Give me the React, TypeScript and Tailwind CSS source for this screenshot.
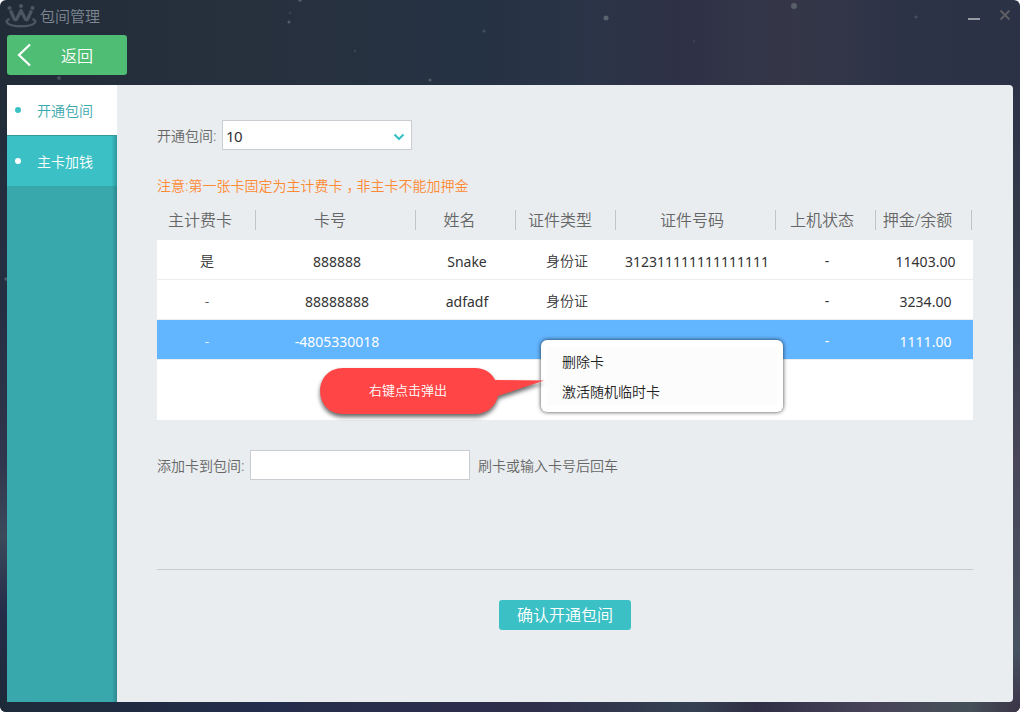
import { useState } from 'react';
import clsx from 'clsx';

type CardRow = {
  main: string;
  card: string;
  name: string;
  idType: string;
  idNumber: string;
  status: string;
  balance: string;
};

const columns = [
  { label: '主计费卡', pad: 'pr-3' },
  { label: '卡号', pad: 'pr-3' },
  { label: '姓名', pad: 'pr-[13px]' },
  { label: '证件类型', pad: 'pr-3' },
  { label: '证件号码', pad: 'pr-2' },
  { label: '上机状态', pad: 'pr-2' },
  { label: '押金/余额', pad: 'pr-[13px]' },
];

const rows: CardRow[] = [
  { main: '是', card: '888888', name: 'Snake', idType: '身份证', idNumber: '312311111111111111', status: '-', balance: '11403.00' },
  { main: '-', card: '88888888', name: 'adfadf', idType: '身份证', idNumber: '', status: '-', balance: '3234.00' },
  { main: '-', card: '-4805330018', name: '', idType: '', idNumber: '', status: '-', balance: '1111.00' },
];

const tabs = ['开通包间', '主卡加钱'];

const stars = [
  { x: 59, y: 78, r: 2, o: 0.25 },
  { x: 289, y: 22, r: 1.5, o: 0.35 },
  { x: 300, y: 0, r: 1.8, o: 0.35 },
  { x: 290, y: 13, r: 1.5, o: 0.12 },
  { x: 355, y: 51, r: 1.5, o: 0.12 },
  { x: 430, y: 80, r: 1.6, o: 0.3 },
  { x: 484, y: 31, r: 1.5, o: 0.2 },
  { x: 606, y: 18, r: 2.5, o: 0.35 },
  { x: 794, y: 6, r: 3, o: 0.3 },
  { x: 916, y: 17, r: 1.6, o: 0.2 },
  { x: 694, y: 41, r: 1.5, o: 0.1 },
  { x: 6, y: 279, r: 1.8, o: 0.3 },
];

function Logo() {
  return (
    <svg className="h-7 w-8" viewBox="0 0 32 28" fill="none" stroke="#4b5660">
      <path d="M5.5 9.5 L9 17.5 Q10.500 20.500 12 17.500 L16 9.500 L20 17.500 Q21.500 20.500 23 17.500 L26.500 9.500" strokeWidth="3.2" strokeLinejoin="round" />
      <path d="M4.500 18 C-1.500 20 2 25.200 16 25.200 C30 25.200 33.500 20 27.500 18" strokeWidth="2.4" />
      <g fill="#4b5660" stroke="none">
        <circle cx="4.500" cy="7" r="2.1" />
        <circle cx="16" cy="5" r="2.1" />
        <circle cx="27.500" cy="7" r="2.1" />
      </g>
    </svg>
  );
}

function Backdrop() {
  return (
    <svg className="absolute inset-0 h-full w-full" viewBox="0 0 1020 712">
      <defs>
        <linearGradient id="sky">
          <stop offset="0" stopColor="#222c39" />
          <stop offset="0.25" stopColor="#27303d" />
          <stop offset="0.46" stopColor="#253243" />
          <stop offset="0.58" stopColor="#2b3448" />
          <stop offset="0.68" stopColor="#2f3146" />
          <stop offset="0.78" stopColor="#353748" />
          <stop offset="0.88" stopColor="#2d3347" />
          <stop offset="1" stopColor="#2b3245" />
        </linearGradient>
        <linearGradient id="left" x2="0" y2="1">
          <stop offset="0" stopColor="#222d39" />
          <stop offset="0.35" stopColor="#252f43" />
          <stop offset="0.6" stopColor="#30364d" />
          <stop offset="0.72" stopColor="#3c495b" />
          <stop offset="0.84" stopColor="#242d49" />
          <stop offset="1" stopColor="#1d2a38" />
        </linearGradient>
        <linearGradient id="right" x2="0" y2="1">
          <stop offset="0" stopColor="#2c3347" />
          <stop offset="0.3" stopColor="#353d4b" />
          <stop offset="0.6" stopColor="#484658" />
          <stop offset="0.9" stopColor="#47525f" />
          <stop offset="1" stopColor="#3b3448" />
        </linearGradient>
        <linearGradient id="bottom">
          <stop offset="0" stopColor="#1d2a38" />
          <stop offset="0.25" stopColor="#232d4b" />
          <stop offset="0.52" stopColor="#2f2e4b" />
          <stop offset="0.68" stopColor="#354152" />
          <stop offset="0.74" stopColor="#2f2e46" />
          <stop offset="0.86" stopColor="#494459" />
          <stop offset="0.95" stopColor="#455058" />
          <stop offset="1" stopColor="#3b3448" />
        </linearGradient>
      </defs>
      <rect width="1020" height="86" fill="url(#sky)" />
      <rect y="86" width="500" height="626" fill="url(#left)" />
      <rect x="500" y="86" width="520" height="626" fill="url(#right)" />
      <rect y="702" width="1020" height="10" fill="url(#bottom)" />
      {stars.map((star) => (
        <circle key={`${star.x}-${star.y}`} cx={star.x} cy={star.y} r={star.r} fill="#a9bdbb" opacity={star.o} />
      ))}
    </svg>
  );
}

function TitleBar() {
  return (
    <header className="flex h-[35px] items-start justify-between">
      <div className="flex items-center pl-[5px]">
        <Logo />
        <h1 className="ml-[3px] mt-0.5 text-[15px] leading-7 text-[#7f8893]">包间管理</h1>
      </div>
      <div className="flex pr-[9px] pt-[9px]">
        <button aria-label="最小化" className="mr-[19px] mt-[9px] h-0.5 w-3 bg-[#959aa5]" />
        <button aria-label="关闭">
          <svg className="h-3 w-3" viewBox="0 0 12 12" stroke="#5e5e62" strokeWidth="2">
            <path d="M1.5 1.5 L10.5 10.5 M10.5 1.5 L1.5 10.5" />
          </svg>
        </button>
      </div>
    </header>
  );
}

function Sidebar({ active, onSelect }: { active: number; onSelect: (index: number) => void }) {
  return (
    <nav className="relative w-[110px] shrink-0 bg-[#38a8ad]">
      <div className="absolute inset-y-0 right-0 w-[5px] bg-linear-to-r from-transparent to-black/20" />
      {tabs.map((tab, index) => (
        <button
          key={tab}
          onClick={() => onSelect(index)}
          className={clsx(
            'relative flex w-full items-center pl-2 text-sm',
            active === index
              ? 'h-[50px] bg-white text-[#38a8ad]'
              : 'h-[51px] border-t border-[#34989d] bg-[#3bc1c5] bg-linear-to-r from-transparent from-95% to-[#2d979b] text-white'
          )}
        >
          <span className={clsx('h-1.5 w-1.5 rounded-full', active === index ? 'bg-[#3bc1c5]' : 'bg-white')} />
          <span className="ml-4 pt-px">{tab}</span>
        </button>
      ))}
    </nav>
  );
}

function CardTable() {
  return (
    <div className="h-[220px] bg-white">
      <table className="w-full table-fixed border-separate border-spacing-0 text-center">
        <colgroup>
          <col className="w-[100px]" />
          <col className="w-[160px]" />
          <col className="w-[100px]" />
          <col className="w-[100px]" />
          <col className="w-[160px]" />
          <col className="w-[100px]" />
          <col className="w-[96px]" />
        </colgroup>
        <thead className="bg-[#e9edf0] text-base text-[#666]">
          <tr className="h-10">
            {columns.map((column) => (
              <th key={column.label} className="p-0 font-[350] whitespace-nowrap">
                <div className={clsx('mr-px flex h-5 items-center justify-center border-r border-[#c2c6cb]', column.pad)}>
                  {column.label}
                </div>
              </th>
            ))}
          </tr>
        </thead>
        <tbody className="text-sm font-normal text-[#333]">
          {rows.map((row, index) => (
            <tr
              key={row.card}
              className={clsx(
                'h-10 *:border-b *:border-[#ebedee] *:p-0 *:pt-1',
                index === 2 && 'bg-[#62b5ff] text-white'
              )}
            >
              <td className="font-[350]">
                <div className="-mt-px mb-px">{row.main}</div>
              </td>
              <td>{row.card}</td>
              <td>{row.name}</td>
              <td className="font-[350]">
                <div className="-mt-px mb-px">{row.idType}</div>
              </td>
              <td>{row.idNumber}</td>
              <td>
                <div className="-mt-px mb-px">{row.status}</div>
              </td>
              <td>
                <span className="pl-px">{row.balance}</span>
              </td>
            </tr>
          ))}
        </tbody>
      </table>
    </div>
  );
}

function ContextMenu() {
  return (
    <div className="absolute left-[541px] top-[340px] h-[72px] w-[242px] rounded-md bg-white p-1.5 shadow-[0_0_4px_rgba(0,0,0,0.75)]">
      <ul className="h-full bg-[#fcfcfc] pl-[15px] text-sm text-[#222]">
        <li className="h-[30px] leading-8">删除卡</li>
        <li className="h-[30px] leading-8">激活随机临时卡</li>
      </ul>
    </div>
  );
}

function Callout() {
  return (
    <div className="absolute left-[320px] top-[368px] flex h-[46px] w-[178px] items-center justify-center">
      <svg className="absolute left-0 top-0 h-[46px] w-[224px] overflow-visible drop-shadow-[0_3px_2px_rgba(0,0,0,0.6)]" viewBox="0 0 224 46" fill="#ff4545">
        <path d="M23 0 H155 C165 0 172 5 175 12 L224 12.5 L178 28 C176 38 167 46 155 46 H23 C-7.500 46 -7.500 0 23 0 Z" />
      </svg>
      <span className="relative pr-0.5 text-[13px] text-white">右键点击弹出</span>
    </div>
  );
}

export default function App() {
  const [active, setActive] = useState(0);

  return (
    <div className="h-[712px] w-[1020px] bg-white font-['Noto_Sans','Noto_Sans_CJK_SC',sans-serif] font-[350]">
      <div className="relative flex h-full flex-col overflow-hidden rounded-md">
        <Backdrop />
        <div className="relative flex h-full flex-col">
          <TitleBar />
          <button className="ml-[7px] flex h-10 w-[120px] shrink-0 items-center rounded-[3px] bg-[#4fbd74] text-base text-white">
            <svg className="ml-2.5 h-6 w-[15px]" viewBox="0 0 15 24" fill="none" stroke="white" strokeWidth="2.2">
              <path d="M13 1.500 L2 12 L13 22.500" />
            </svg>
            <span className="ml-[29px] pt-px">返回</span>
          </button>

          <div className="mx-[7px] mb-2.5 mt-2.5 flex min-h-0 flex-1 overflow-hidden rounded-r">
            <Sidebar active={active} onSelect={setActive} />
            <main className="flex-1 bg-[#e9edf0] px-10 pt-[35px] text-sm text-[#666]">
              <div className="flex h-[30px] items-center">
                <span className="w-[65px] whitespace-nowrap pt-0.5">开通包间:</span>
                <button className="flex h-[30px] w-[190px] items-center justify-between border border-[#c9cdd1] bg-white pl-[3px] pr-1.5 text-[15px] font-normal text-[#333]">
                  <span className="pt-[3px] tracking-[-0.5px]">10</span>
                  <svg className="mt-1 h-2 w-3" viewBox="0 0 12 8" fill="none" stroke="#3bc1c5" strokeWidth="2.2">
                    <path d="M1.500 1.500 L6 6 L10.500 1.500" />
                  </svg>
                </button>
              </div>
              <p className="mt-6 h-[26px] leading-6 text-[#ff8a34]">
                注意:第一张卡固定为主计费卡<span className="pl-1 tracking-[-4px]">，</span>非主卡不能加押金
              </p>
              <CardTable />
              <div className="mt-[30px] flex h-[30px] items-center">
                <span className="w-[93px] whitespace-nowrap pt-0.5">添加卡到包间:</span>
                <input aria-label="添加卡到包间" className="h-[30px] w-[220px] border border-[#c9cdd1] bg-white px-1 outline-none" />
                <span className="ml-2 pt-0.5">刷卡或输入卡号后回车</span>
              </div>
              <div className="mt-[89px] border-t border-[#c7cbcf] pt-[30px] text-center">
                <button className="h-[30px] w-[132px] rounded-[3px] bg-[#3bc1c5] text-base text-white">确认开通包间</button>
              </div>
            </main>
          </div>
        </div>
        <ContextMenu />
        <Callout />
      </div>
    </div>
  );
}
